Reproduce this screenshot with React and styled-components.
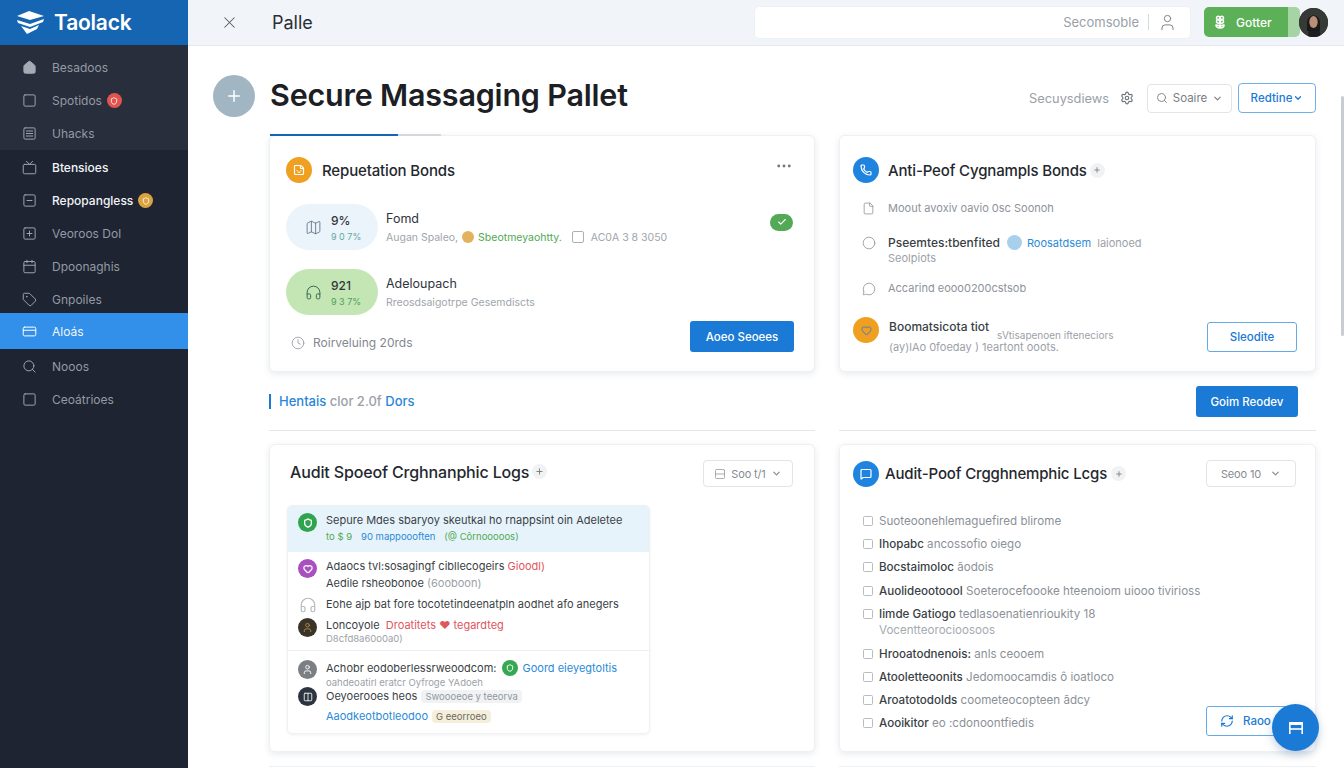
import React from "react";
import styled, { createGlobalStyle } from "styled-components";
import {
  X, User, Settings, Search, ChevronDown, Home, Square, SquareMenu, Tv, SquareMinus, SquarePlus, Calendar, Tag,
  CreditCard, Ellipsis, Check, Clock, File, Circle, MessageCircle, Plus, RefreshCw, Columns2, Heart, Shield,
  MessageSquare, Phone, Map, Headphones, Flower2, Sticker
} from "lucide-react";

const GlobalStyle = createGlobalStyle`
  html, body { margin: 0; height: 100%; overflow: hidden; background: #fff; }
  body { font-family: "Inter", "Liberation Sans", sans-serif; color: #20252c; }
  * { box-sizing: border-box; }
`;

const Shell = styled.div`
  display: flex;
  height: 768px;
  width: 1344px;
  position: relative;
  overflow: hidden;
`;

const Sidebar = styled.aside`
  width: 188px;
  flex: none;
  background: #1e2431;
  display: flex;
  flex-direction: column;
`;

const Brand = styled.div`
  height: 45px;
  background: #1565b2;
  display: flex;
  align-items: center;
  gap: 9px;
  padding-left: 16px;
  color: #fff;
  font-size: 21px;
  font-weight: 600;
  letter-spacing: -0.2px;
`;

const NavGroup = styled.div`
  background: ${(p) => (p.$light ? "#282e3b" : "transparent")};
  height: ${(p) => p.$height}px;
  padding-top: ${(p) => p.$top || 0}px;
  flex: none;
`;

const NavItem = styled.div`
  height: ${(p) => (p.$active ? 36 : 33)}px;
  display: flex;
  align-items: center;
  gap: 15px;
  padding-left: 22px;
  font-size: 12px;
  font-weight: ${(p) => (p.$bright ? 500 : 400)};
  color: ${(p) => (p.$active || p.$bright ? "#f1f4f8" : "#939aa5")};
  background: ${(p) => (p.$active ? "#3390ea" : "transparent")};
  svg { color: ${(p) => (p.$active ? "#fff" : "#a4abb5")}; flex: none; }
`;

const NavBadge = styled.span`
  width: 15px;
  height: 15px;
  border-radius: 50%;
  background: ${(p) => p.$color};
  margin-left: -10px;
  display: flex;
  align-items: center;
  justify-content: center;
  svg { color: #fff; }
`;

const Content = styled.div`
  flex: 1;
  min-width: 0;
  display: flex;
  flex-direction: column;
`;

const TopBar = styled.header`
  height: 46px;
  flex: none;
  background: #f1f5f9;
  border-bottom: 1px solid #e4e8ed;
  display: flex;
  align-items: center;
  padding: 0 16px 1px 32px;
  svg { flex: none; }
`;

const PageName = styled.div`
  font-size: 18px;
  margin-left: 33px;
  color: #2a2f35;
`;

const SearchBox = styled.div`
  margin-left: auto;
  width: 437px;
  height: 33px;
  background: #fff;
  border-radius: 5px;
  border: 1px solid #edf0f4;
  display: flex;
  align-items: center;
  justify-content: flex-end;
  padding-right: 13px;
  font-size: 13px;
  color: #9aa0a8;
`;

const SearchSep = styled.span`
  width: 1px;
  height: 16px;
  background: #d5d9de;
  margin: 0 9px;
`;

const GreenButton = styled.div`
  margin-left: 13px;
  width: 96px;
  height: 30px;
  border-radius: 5px;
  background: linear-gradient(90deg, #5cb158 0 84px, #a7d4a4 84px);
  color: #fff;
  font-size: 12px;
  font-weight: 500;
  display: flex;
  align-items: center;
  gap: 9px;
  padding-left: 9px;
`;

const Avatar = styled.div`
  width: 29px;
  height: 29px;
  border-radius: 50%;
  margin-left: -1px;
  overflow: hidden;
  background: #2a2c2b;
  flex: none;
`;

const Main = styled.main`
  flex: 1;
  min-height: 0;
  padding: 0 28px 0 25px;
  position: relative;
`;

const TitleRow = styled.div`
  height: 89px;
  display: flex;
  align-items: center;
  padding-top: 10px;
`;

const TitleDisc = styled.div`
  width: 42px;
  height: 42px;
  border-radius: 50%;
  background: #a1b6c2;
  color: #fff;
  display: flex;
  align-items: center;
  justify-content: center;
  flex: none;
`;

const Title = styled.h1`
  margin: 0 0 3px 15px;
  font-size: 30.5px;
  font-weight: 600;
  color: #1c2024;
  letter-spacing: -0.2px;
`;

const TitleActions = styled.div`
  margin-left: auto;
  display: flex;
  align-items: center;
  font-size: 12.8px;
  color: #9ba0a7;
  padding-top: 5px;
`;

const SmallSelect = styled.div`
  height: ${(p) => (p.$blue ? 30 : 29)}px;
  width: ${(p) => p.$w}px;
  margin-left: ${(p) => p.$ml || 0}px;
  border: 1px solid ${(p) => (p.$blue ? "#6fb1ea" : "#e1e4e8")};
  border-radius: 4px;
  display: flex;
  align-items: center;
  justify-content: center;
  gap: 5px;
  font-size: 11.5px;
  font-weight: ${(p) => (p.$blue ? 500 : 400)};
  color: ${(p) => (p.$blue ? "#1a78d6" : "#777d85")};
  background: #fff;
`;

const Columns = styled.div`
  display: grid;
  grid-template-columns: 546px 477px;
  column-gap: 24px;
  margin-left: 56px;
`;

const Card = styled.section`
  background: #fff;
  border: 1px solid #eef0f3;
  border-radius: 6px;
  box-shadow: 0 2px 7px rgba(40, 60, 90, 0.11);
  height: ${(p) => p.$height}px;
  position: relative;
  display: flex;
  flex-direction: column;
`;

const TabMark = styled.div`
  position: absolute;
  top: -2px;
  left: 0;
  width: 128px;
  height: 2px;
  background: #1565b2;
  &::after {
    content: "";
    position: absolute;
    left: 128px;
    top: 0;
    width: 43px;
    height: 2px;
    background: #d4d7db;
  }
`;

const CardHead = styled.div`
  display: flex;
  align-items: center;
  padding: ${(p) => p.$pad || "21px 21px 0 16px"};
  font-size: ${(p) => p.$size || 15}px;
  font-weight: 500;
  color: #24282e;
  letter-spacing: -0.15px;
`;

const IconDisc = styled.div`
  width: ${(p) => p.$size || 26}px;
  height: ${(p) => p.$size || 26}px;
  border-radius: 50%;
  background: ${(p) => p.$color};
  color: #fff;
  display: flex;
  align-items: center;
  justify-content: center;
  flex: none;
`;

const HeadTitle = styled.span`
  margin-left: ${(p) => p.$ml ?? 10}px;
  margin-bottom: ${(p) => p.$lift || 0}px;
`;

const PlusChip = styled.span`
  width: 15px;
  height: 15px;
  margin-left: ${(p) => p.$ml ?? 3}px;
  margin-bottom: ${(p) => p.$lift || 0}px;
  background: #f0f2f4;
  border-radius: 50%;
  color: #777;
  display: flex;
  align-items: center;
  justify-content: center;
`;

const HeadRight = styled.div`
  margin-left: auto;
  display: flex;
  color: #777;
`;

const StatRow = styled.div`
  display: flex;
  align-items: center;
  padding: 0 21px 0 16px;
  margin-top: ${(p) => p.$mt}px;
`;

const StatPill = styled.div`
  width: 92px;
  height: 46px;
  flex: none;
  border-radius: 23px;
  background: ${(p) => p.$bg};
  display: flex;
  align-items: center;
  gap: 9px;
  padding-left: 19px;
  color: ${(p) => p.$ic};
`;

const StatNums = styled.div`
  display: flex;
  flex-direction: column;
  gap: 3px;
  font-size: 12px;
  font-weight: 500;
  color: #30353b;
  small {
    font-size: 9px;
    font-weight: 400;
    color: ${(p) => p.$sub};
  }
`;

const StatText = styled.div`
  margin-left: 8px;
  display: flex;
  flex-direction: column;
  gap: 5px;
  font-size: 12.5px;
  color: #30353b;
  min-width: 0;
`;

const StatSub = styled.div`
  display: flex;
  align-items: center;
  gap: 4px;
  font-size: 10.5px;
  color: #a0a5ac;
  white-space: nowrap;
`;

const GreenText = styled.span`
  color: #4fa94f;
`;

const TinyBox = styled.span`
  width: 12px;
  height: 12px;
  border: 1px solid #aab0b6;
  border-radius: 2px;
  margin-left: 6px;
  margin-right: 3px;
`;

const TrendChip = styled.div`
  margin-left: auto;
  margin-bottom: 10px;
  width: 23px;
  height: 17px;
  border-radius: 9px;
  background: #53a955;
  color: #fff;
  display: flex;
  align-items: center;
  justify-content: center;
`;

const CardFoot = styled.div`
  margin-top: auto;
  padding: 0 20px 19px 21px;
  display: flex;
  align-items: flex-end;
  justify-content: space-between;
`;

const FootNote = styled.div`
  display: flex;
  align-items: center;
  gap: 8px;
  font-size: 12px;
  color: #82888f;
  padding-bottom: 2px;
`;

const Solid = styled.div`
  width: ${(p) => p.$w}px;
  height: ${(p) => p.$h}px;
  background: #1a7ad6;
  border-radius: 3px;
  color: #fff;
  font-size: 11.5px;
  font-weight: 500;
  display: flex;
  align-items: center;
  justify-content: center;
`;

const Outline = styled.div`
  width: ${(p) => p.$w}px;
  height: 30px;
  border: 1px solid #63aae6;
  border-radius: 3px;
  color: #1a78d6;
  font-size: 11.5px;
  font-weight: 500;
  display: flex;
  align-items: center;
  justify-content: ${(p) => (p.$start ? "flex-start" : "center")};
  gap: 9px;
  padding-left: ${(p) => (p.$start ? 13 : 0)}px;
  flex: none;
`;

const BondList = styled.div`
  padding: 15px 19px 0 22px;
  position: relative;
  flex: 1;
`;

const BondRow = styled.div`
  display: flex;
  align-items: ${(p) => (p.$top ? "flex-start" : "center")};
  margin-top: ${(p) => p.$mt || 0}px;
  margin-left: ${(p) => p.$ml || 0}px;
  font-size: 11px;
  color: #8d939a;
  line-height: 15px;
  svg { color: #7f858c; flex: none; }
`;

const BondText = styled.div`
  margin-left: ${(p) => p.$ml}px;
  white-space: nowrap;
  line-height: ${(p) => p.$lh || 15}px;
`;

const Strong = styled.span`
  color: #3a3f46;
  font-weight: 500;
  font-size: ${(p) => p.$size || "inherit"};
`;

const Blue = styled.span`
  color: #2a8ad8;
`;

const Gray = styled.span`
  color: #9ca1a8;
`;

const Red = styled.span`
  color: #e0565e;
`;

const FloatNote = styled.span`
  color: #9ca1a8;
  font-size: 10px;
  line-height: 10px;
  margin-left: 8px;
  position: relative;
  top: 8px;
`;

const BlueDot = styled.span`
  display: inline-block;
  width: 15px;
  height: 15px;
  border-radius: 50%;
  background: #a8d0ec;
  vertical-align: -3px;
  margin: 0 5px 0 7px;
`;

const BondButtonSlot = styled.div`
  position: absolute;
  right: 18px;
  bottom: 19px;
`;

const SectionRow = styled.div`
  grid-column: 1 / -1;
  height: 59px;
  margin-bottom: 13px;
  display: grid;
  grid-template-columns: 546px 477px;
  column-gap: 24px;
`;

const SectionLeft = styled.div`
  border-bottom: 1px solid #e5e7ea;
  display: flex;
  align-items: center;
`;

const SectionName = styled.div`
  border-left: 2px solid #1a7ad6;
  padding-left: 8px;
  font-size: 13px;
  line-height: 15px;
  color: #2a86d8;
  font-weight: 500;
`;

const SectionRight = styled.div`
  border-bottom: 1px solid #e5e7ea;
  display: flex;
  justify-content: flex-end;
  padding: 14px 18px 0 0;
`;

const SelectHead = styled(SmallSelect)`
  height: 27px;
  color: #868b92;
  font-size: 11px;
`;

const LogList = styled.div`
  margin: 18px 0 0 17px;
  width: 363px;
  height: 229px;
  border: 1px solid #eef0f2;
  border-radius: 5px;
  box-shadow: 0 1px 3px rgba(40, 60, 90, 0.07);
  overflow: hidden;
`;

const LogRow = styled.div`
  display: flex;
  align-items: flex-start;
  gap: 9px;
  height: ${(p) => p.$h}px;
  padding: ${(p) => p.$pad ?? 5}px 0 0 10px;
  background: ${(p) => (p.$hl ? "#e7f3fb" : "transparent")};
  border-top: ${(p) => (p.$line ? "1px solid #eceef1" : "none")};
  font-size: 11px;
  white-space: nowrap;
  color: #3a3f46;
`;

const LogBody = styled.div`
  display: flex;
  flex-direction: column;
  gap: ${(p) => p.$gap ?? 3}px;
  padding-top: ${(p) => p.$pt || 0}px;
  line-height: 14px;
`;

const LogSub = styled.div`
  font-size: ${(p) => p.$size || 9.5}px;
  display: flex;
  align-items: center;
  gap: 9px;
`;

const InlineRow = styled.span`
  display: flex;
  align-items: center;
  gap: 5px;
`;

const Face = styled.div`
  width: ${(p) => p.$size || 19}px;
  height: ${(p) => p.$size || 19}px;
  flex: none;
  border-radius: 50%;
  background: ${(p) => p.$bg};
  color: ${(p) => p.$fg || "#fff"};
  display: flex;
  align-items: center;
  justify-content: center;
`;

const Tag2 = styled.span`
  border-radius: 4px;
  background: ${(p) => p.$bg};
  color: ${(p) => p.$fg};
  font-size: 9.5px;
  padding: 1px 4px;
  margin-left: 4px;
`;

const CheckList = styled.div`
  padding: 26px 0 0 23px;
  display: flex;
  flex-direction: column;
`;

const CheckRow = styled.div`
  display: flex;
  align-items: flex-start;
  gap: 6px;
  height: ${(p) => p.$h || 23.2}px;
  font-size: 11.6px;
  line-height: 16px;
  color: #8c9198;
  white-space: nowrap;
`;

const CheckSub = styled.div`
  color: #a6abb1;
`;

const Box = styled.span`
  width: 10px;
  height: 10px;
  border: 1px solid #b9bdc2;
  border-radius: 1.5px;
  margin-top: 3px;
  flex: none;
`;

const RestoreSlot = styled.div`
  position: absolute;
  left: 366px;
  top: 261px;
`;

const NextCard = styled.div`
  margin-top: 14px;
  height: 20px;
  border-top: 1px solid #eef0f3;
`;

const Fab = styled.div`
  position: absolute;
  left: 1272px;
  top: 704px;
  width: 47px;
  height: 47px;
  border-radius: 50%;
  background: #1a7ad6;
  color: #fff;
  display: flex;
  align-items: center;
  justify-content: center;
  box-shadow: 0 4px 10px rgba(30, 80, 140, 0.25);
`;

const ScrollThumb = styled.div`
  position: absolute;
  right: 0;
  top: 50px;
  width: 3px;
  height: 240px;
  background: #c9ccd0;
  border-radius: 2px;
`;

const LogoMark = () => (
  <svg width="29" height="24" viewBox="0 0 29 24" fill="#fff">
    <path d="M1 5 L13 0 L28 5 L14 9 Z" />
    <path d="M1 9 L14 13 L28 8 L27 11 L14 16 L2 12 Z" />
    <path d="M5 15 L14 18 L23 14 L21 18 L11 23 Z" />
  </svg>
);

const PortraitSvg = () => (
  <svg width="29" height="29" viewBox="0 0 29 29">
    <rect width="29" height="29" fill="#353a37" />
    <path d="M9 29 C9 21 11 20 14.5 20 C18 20 21 21 22 29 Z" fill="#1f1f22" />
    <path d="M8 15 C8 5 21 5 21 15 L21 23 L8 23 Z" fill="#191a1c" />
    <ellipse cx="14.5" cy="14" rx="4.2" ry="6" fill="#b98d76" />
  </svg>
);

const FabMark = () => (
  <svg width="18" height="18" viewBox="0 0 18 18" fill="none" stroke="#fff">
    <path d="M2 4.5 H16" strokeWidth="3" />
    <path d="M2 10 H16" strokeWidth="1.6" />
    <path d="M2.8 3 V15 M15.2 3 V15" strokeWidth="1.6" />
  </svg>
);

const navTop = [
  { icon: Home, label: "Besadoos", filled: true },
  { icon: Square, label: "Spotidos", badge: "#e2554f" },
  { icon: SquareMenu, label: "Uhacks" },
];

const navMid = [
  { icon: Tv, label: "Btensioes", bright: true },
  { icon: SquareMinus, label: "Repopangless", bright: true, badge: "#dba33f" },
  { icon: SquarePlus, label: "Veoroos Dol" },
  { icon: Calendar, label: "Dpoonaghis" },
  { icon: Tag, label: "Gnpoiles" },
];

const navEnd = [
  { icon: Search, label: "Nooos" },
  { icon: Square, label: "Ceoátrioes" },
];

const checks = [
  { a: "", b: "Suoteoonehlemaguefired blirome" },
  { a: "Ihopabc", b: " ancossofio oiego" },
  { a: "Bocstaimoloc", b: " ãodois" },
  { a: "Auolideootoool", b: " Soeterocefoooke hteenoiom uiooo tivirioss" },
  { a: "Iimde Gatiogo", b: " tedlasoenatienrioukity 18", sub: "Vocentteorocioosoos" },
  { a: "Hrooatodnenois:", b: " anls ceooem" },
  { a: "Atooletteoonits", b: " Jedomoocamdis ô ioatloco" },
  { a: "Aroatotodolds", b: " coometeocopteen ãdcy" },
  { a: "Aooikitor", b: " eo :cdonoontfiedis" },
];

const renderNav = (list) =>
  list.map((n) => (
    <NavItem key={n.label} $bright={n.bright}>
      <n.icon size={15} strokeWidth={1.5} fill={n.filled ? "currentColor" : "none"} />
      {n.label}
      {n.badge && (
        <NavBadge $color={n.badge}>
          <Shield size={8} strokeWidth={2.5} />
        </NavBadge>
      )}
    </NavItem>
  ));

export default function App() {
  return (
    <Shell>
      <GlobalStyle />
      <Sidebar>
        <Brand>
          <LogoMark />
          Taolack
        </Brand>
        <NavGroup $light $height={105} $top={6}>{renderNav(navTop)}</NavGroup>
        <NavGroup $height={163} $top={1}>{renderNav(navMid)}</NavGroup>
        <NavItem $active>
          <CreditCard size={15} strokeWidth={1.6} />
          Aloás
        </NavItem>
        <NavGroup $height={70} $top={1}>{renderNav(navEnd)}</NavGroup>
      </Sidebar>

      <Content>
        <TopBar>
          <X size={19} strokeWidth={1.3} color="#555b62" />
          <PageName>Palle</PageName>
          <SearchBox>
            Secomsoble
            <SearchSep />
            <User size={19} strokeWidth={1.2} color="#777d85" />
          </SearchBox>
          <GreenButton>
            <Flower2 size={14} strokeWidth={2.6} />
            Gotter
          </GreenButton>
          <Avatar>
            <PortraitSvg />
          </Avatar>
        </TopBar>

        <Main>
          <ScrollThumb />
          <TitleRow>
            <TitleDisc>
              <Plus size={18} strokeWidth={2} />
            </TitleDisc>
            <Title>Secure Massaging Pallet</Title>
            <TitleActions>
              Secuysdiews
              <Settings size={14} strokeWidth={2} color="#6f757c" style={{ marginLeft: 11 }} />
              <SmallSelect $w={85} $ml={13}>
                <Search size={12} strokeWidth={1.8} />
                Soaire
                <ChevronDown size={11} strokeWidth={2.4} />
              </SmallSelect>
              <SmallSelect $w={78} $ml={6} $blue>
                Redtine
                <ChevronDown size={10} strokeWidth={3} style={{ marginLeft: -4 }} />
              </SmallSelect>
            </TitleActions>
          </TitleRow>

          <Columns>
            <Card $height={237}>
              <TabMark />
              <CardHead>
                <IconDisc $color="#f0a020">
                  <Sticker size={12} strokeWidth={2.4} />
                </IconDisc>
                <HeadTitle>Repuetation Bonds</HeadTitle>
                <HeadRight>
                  <Ellipsis size={18} strokeWidth={1.8} style={{ marginTop: -8 }} />
                </HeadRight>
              </CardHead>
              <StatRow $mt={21}>
                <StatPill $bg="#ecf4fb" $ic="#5c6f80">
                  <Map size={17} strokeWidth={1.2} />
                  <StatNums $sub="#5ea8a0">
                    9%
                    <small>9 0 7%</small>
                  </StatNums>
                </StatPill>
                <StatText>
                  Fomd
                  <StatSub>
                    Augan Spaleo,
                    <IconDisc $size={12} $color="#e3b25d" />
                    <GreenText>Sbeotmeyaohtty.</GreenText>
                    <TinyBox />
                    AC0A 3 8 3050
                  </StatSub>
                </StatText>
                <TrendChip>
                  <Check size={10} strokeWidth={2.6} />
                </TrendChip>
              </StatRow>
              <StatRow $mt={19}>
                <StatPill $bg="#c3e6b4" $ic="#2f5f48">
                  <Headphones size={17} strokeWidth={1.3} />
                  <StatNums $sub="#4aa357">
                    921
                    <small>9 3 7%</small>
                  </StatNums>
                </StatPill>
                <StatText>
                  Adeloupach
                  <StatSub>Rreosdsaigotrpe Gesemdiscts</StatSub>
                </StatText>
              </StatRow>
              <CardFoot>
                <FootNote>
                  <Clock size={14} strokeWidth={1.2} />
                  Roirveluing 20rds
                </FootNote>
                <Solid $w={104} $h={31}>Aoeo Seoees</Solid>
              </CardFoot>
            </Card>

            <Card $height={237}>
              <CardHead $pad="21px 0 0 13px">
                <IconDisc $color="#1f84e0">
                  <Phone size={12} strokeWidth={2.4} />
                </IconDisc>
                <HeadTitle $ml={9}>Anti-Peof Cygnampls Bonds</HeadTitle>
                <PlusChip>
                  <Plus size={8} strokeWidth={2.4} />
                </PlusChip>
              </CardHead>
              <BondList>
                <BondRow $mt={3}>
                  <File size={13} strokeWidth={1.3} />
                  <BondText $ml={13}>Moout avoxiv oavio 0sc Soonoh</BondText>
                </BondRow>
                <BondRow $top $mt={19}>
                  <Circle size={14} strokeWidth={1.2} style={{ marginTop: 1 }} />
                  <BondText $ml={12}>
                    <Strong $size="12px">Pseemtes:tbenfited</Strong>
                    <BlueDot />
                    <Blue>Roosatdsem</Blue> <Gray>&nbsp;laionoed</Gray>
                    <br />
                    <Gray>Seolpiots</Gray>
                  </BondText>
                </BondRow>
                <BondRow $mt={15}>
                  <MessageCircle size={14} strokeWidth={1.2} />
                  <BondText $ml={12}>Accarind eooo0200cstsob</BondText>
                </BondRow>
                <BondRow $top $mt={21} $ml={-9}>
                  <IconDisc $color="#f0a020">
                    <Heart size={11} strokeWidth={2.6} />
                  </IconDisc>
                  <BondText $ml={10} $lh={20}>
                    <Strong $size="12px">Boomatsicota tiot</Strong>
                    <FloatNote>sVtisapenoen ifteneciors</FloatNote>
                    <br />
                    <Gray>(ay)lAo 0foeday ) 1eartont ooots.</Gray>
                  </BondText>
                </BondRow>
                <BondButtonSlot>
                  <Outline $w={90}>Sleodite</Outline>
                </BondButtonSlot>
              </BondList>
            </Card>

            <SectionRow>
              <SectionLeft>
                <SectionName>Hentais <Gray>clor 2.0f</Gray> Dors</SectionName>
              </SectionLeft>
              <SectionRight>
                <Solid $w={102} $h={31}>Goim Reodev</Solid>
              </SectionRight>
            </SectionRow>

            <Card $height={308}>
              <CardHead $size={16} $pad="15px 21px 0 20px">
                <HeadTitle $ml={0} $lift={4}>Audit Spoeof Crghnanphic Logs</HeadTitle>
                <PlusChip $lift={4}>
                  <Plus size={9} strokeWidth={2.4} />
                </PlusChip>
                <HeadRight>
                  <SelectHead $w={90}>
                    <Columns2 size={12} strokeWidth={1.4} style={{ transform: "rotate(90deg)" }} />
                    Soo t/1
                    <ChevronDown size={11} strokeWidth={2.6} />
                  </SelectHead>
                </HeadRight>
              </CardHead>
              <LogList>
                <LogRow $h={46} $hl $pad={7}>
                  <Face $bg="#2ea44f"><Shield size={10} strokeWidth={3} /></Face>
                  <LogBody>
                    <span>Sepure Mdes sbaryoy skeutkal ho rnappsint oin Adeletee</span>
                    <LogSub>
                      <GreenText>to $ 9</GreenText>
                      <Blue>90 mappoooften</Blue>
                      <GreenText>(@ Côrnooooos)</GreenText>
                    </LogSub>
                  </LogBody>
                </LogRow>
                <LogRow $h={39} $pad={7}>
                  <Face $bg="#a94fc0"><Heart size={10} strokeWidth={3} /></Face>
                  <LogBody>
                    <span>Adaocs tvl:sosagingf cibllecogeirs <Red>Gioodl)</Red></span>
                    <span>Aedile rsheobonoe <Gray>(6ooboon)</Gray></span>
                  </LogBody>
                </LogRow>
                <LogRow $h={26} $pad={4}>
                  <Face $bg="transparent" $fg="#b5b9be">
                    <Headphones size={18} strokeWidth={1.6} />
                  </Face>
                  <LogBody $pt={2}>
                    <span>Eohe ajp bat fore tocotetindeenatpln aodhet afo anegers</span>
                  </LogBody>
                </LogRow>
                <LogRow $h={33} $pad={1}>
                  <Face $bg="#3a3428" $fg="#b08a4f"><User size={11} strokeWidth={2} /></Face>
                  <LogBody $gap={0}>
                    <span>Loncoyole &nbsp;<Red>Droatitets</Red> <Red>♥</Red> <Red>tegardteg</Red></span>
                    <LogSub><Gray>D8cfd8a60o0a0)</Gray></LogSub>
                  </LogBody>
                </LogRow>
                <LogRow $h={37} $line $pad={9}>
                  <Face $bg="#7b7f84"><User size={11} strokeWidth={2} /></Face>
                  <LogBody $gap={0}>
                    <InlineRow>
                      Achobr eodoberlessrweoodcom:
                      <Face $size={16} $bg="#36a852"><Shield size={8} strokeWidth={3} /></Face>
                      <Blue>Goord eieyegtoltis</Blue>
                    </InlineRow>
                    <LogSub><Gray>oahdeoatirl eratcr Oyfroge YAdoeh</Gray></LogSub>
                  </LogBody>
                </LogRow>
                <LogRow $h={48} $pad={0}>
                  <Face $bg="#2b3440"><Columns2 size={10} strokeWidth={2} /></Face>
                  <LogBody $gap={5} $pt={2}>
                    <span>Oeyoerooes heos<Tag2 $bg="#f0f2f4" $fg="#9298a0">Swoooeoe y teeorva</Tag2></span>
                    <span><Blue>Aaodkeotbotleodoo</Blue><Tag2 $bg="#f5eedb" $fg="#6c6a5e">G eeorroeo</Tag2></span>
                  </LogBody>
                </LogRow>
              </LogList>
            </Card>

            <Card $height={308}>
              <CardHead $pad="15px 19px 0 13px">
                <IconDisc $color="#1f84e0">
                  <MessageSquare size={12} strokeWidth={2.4} />
                </IconDisc>
                <HeadTitle $ml={6}>Audit-Poof Crgghnemphic Lcgs</HeadTitle>
                <PlusChip $ml={4}>
                  <Plus size={8} strokeWidth={2.4} />
                </PlusChip>
                <HeadRight>
                  <SelectHead $w={90}>
                    Seoo 10
                    <ChevronDown size={11} strokeWidth={2.6} style={{ marginLeft: 4 }} />
                  </SelectHead>
                </HeadRight>
              </CardHead>
              <CheckList>
                {checks.map((c) => (
                  <CheckRow key={c.a + c.b} $h={c.sub ? 40 : undefined}>
                    <Box />
                    <div>
                      <Strong>{c.a}</Strong>
                      {c.b}
                      {c.sub && <CheckSub>{c.sub}</CheckSub>}
                    </div>
                  </CheckRow>
                ))}
              </CheckList>
              <RestoreSlot>
                <Outline $w={84} $start>
                  <RefreshCw size={14} strokeWidth={2} />
                  Raoo
                </Outline>
              </RestoreSlot>
            </Card>

            <NextCard />
            <NextCard />
          </Columns>
        </Main>
      </Content>

      <Fab>
        <FabMark />
      </Fab>
    </Shell>
  );
}
